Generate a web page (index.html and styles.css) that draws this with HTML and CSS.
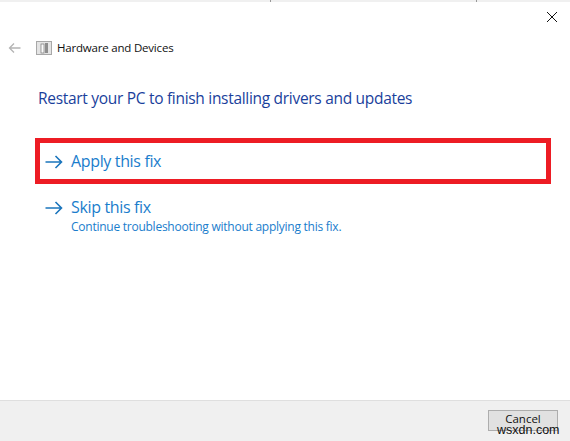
FILE: index.html
```html
<!DOCTYPE html>
<html lang="en">
<head>
    <meta charset="UTF-8">
    <title>Hardware and Devices</title>
    <link rel="stylesheet" href="styles.css">
</head>
<body>
    <div class="window">
        <!-- top strip -->
        <div class="top-strip">
            <span class="tick"></span>
            <span class="tick"></span>
        </div>

        <div class="close-row">
            <svg class="close-icon" width="12" height="12" viewBox="0 0 12 12">
                <path d="M1 1L11 11M11 1L1 11" stroke="#111" stroke-width="1" fill="none"/>
            </svg>
        </div>

        <div class="nav-row">
            <svg class="back-icon" width="13" height="12" viewBox="0 0 13 12">
                <path d="M12.500 6H1.500M6 1.500L1.500 6L6 10.500" stroke="#b4b4b4" stroke-width="1.300" fill="none"/>
            </svg>
            <svg class="app-icon" width="16" height="14" viewBox="0 0 16 14">
                <rect x="0.500" y="0.500" width="15" height="13" fill="#e4e4e4" stroke="#a8a8a8"/>
                <rect x="5" y="3" width="3" height="9" fill="#fafafa" stroke="#777" stroke-width="0.700"/>
                <rect x="9" y="2" width="3" height="10" fill="#8d8d8d"/>
            </svg>
            <span class="nav-title">Hardware and Devices</span>
        </div>

        <div class="content">
            <h1 class="main-title">Restart your PC to finish installing drivers and updates</h1>

            <!-- options -->
            <div class="option option-marked">
                <svg class="arrow" width="18" height="14" viewBox="0 0 18 14">
                    <path d="M0.500 7H16.500M10.500 1L16.500 7L10.500 13" stroke="#1b75bc" stroke-width="1.600" fill="none"/>
                </svg>
                <div class="option-text">
                    <div class="option-title">Apply this fix</div>
                </div>
            </div>

            <div class="option">
                <svg class="arrow" width="18" height="14" viewBox="0 0 18 14">
                    <path d="M0.500 7H16.500M10.500 1L16.500 7L10.500 13" stroke="#1b75bc" stroke-width="1.600" fill="none"/>
                </svg>
                <div class="option-text">
                    <div class="option-title">Skip this fix</div>
                    <div class="option-desc">Continue troubleshooting without applying this fix.</div>
                </div>
            </div>
        </div>

        <div class="footer">
            <button class="cancel-btn">Cancel</button>
        </div>

        <span class="watermark">wsxdn.com</span>
    </div>
</body>
</html>
```

FILE: styles.css
```css
* {
    margin: 0;
    padding: 0;
    box-sizing: border-box;
}

body {
    font-family: 'Open Sans', 'Noto Sans', sans-serif;
    background: #fff;
    overflow: hidden;
}

.window {
    width: 570px;
    height: 441px;
    display: flex;
    flex-direction: column;
    position: relative;
    background: #fff;
}

.top-strip {
    height: 2px;
    background: #f0f0f0;
    display: flex;
    padding-left: 270px;
    gap: 205px;
}

.tick {
    width: 1px;
    height: 2px;
    background: #999;
}

.close-row {
    height: 20px;
    padding: 9px 12px 0 0;
    display: flex;
    justify-content: flex-end;
}

.nav-row {
    height: 31px;
    margin-top: 10px;
    padding-left: 8px;
    display: flex;
    align-items: center;
}

.app-icon {
    margin-left: 15px;
}

.nav-title {
    margin-left: 5px;
    font-size: 11.500px;
    letter-spacing: -0.2px;
    color: #111;
}

.content {
    flex: 1;
    padding: 24px 19px 0 35px;
}

.main-title {
    font-size: 15.500px;
    font-weight: 400;
    line-height: 22px;
    letter-spacing: -0.3px;
    color: #1a3f9c;
    padding-left: 3px;
    margin-bottom: 29px;
}

.option {
    display: flex;
    align-items: flex-start;
    padding: 9px 0 0 10px;
    color: #1a7dcc;
}

.option-marked {
    height: 46px;
    border: 5px solid #ed1c24;
    padding: 7px 0 0 5px;
    margin-bottom: 3px;
}

.arrow {
    flex-shrink: 0;
    margin-top: 5px;
}

.option-text {
    margin-left: 8px;
}

.option-title {
    font-size: 16px;
    line-height: 22px;
    letter-spacing: -0.35px;
}

.option-desc {
    font-size: 12px;
    line-height: 15px;
    padding-top: 1px;
    letter-spacing: -0.25px;
}

.footer {
    height: 41px;
    background: #f0f0f0;
    border-top: 1px solid #dfdfdf;
    display: flex;
    justify-content: flex-end;
    padding: 9px 12px 0 0;
}

.cancel-btn {
    width: 70px;
    height: 21px;
    border: 1px solid #adadad;
    background: #e1e1e1;
    font-family: inherit;
    font-size: 11.500px;
    color: #111;
    line-height: 16px;
    padding-bottom: 3px;
}

/* watermark lies over the button */
.watermark {
    position: absolute;
    left: 497px;
    top: 422px;
    font-family: 'Liberation Sans', sans-serif;
    font-size: 12.500px;
    line-height: 16px;
    color: #111;
}
```
